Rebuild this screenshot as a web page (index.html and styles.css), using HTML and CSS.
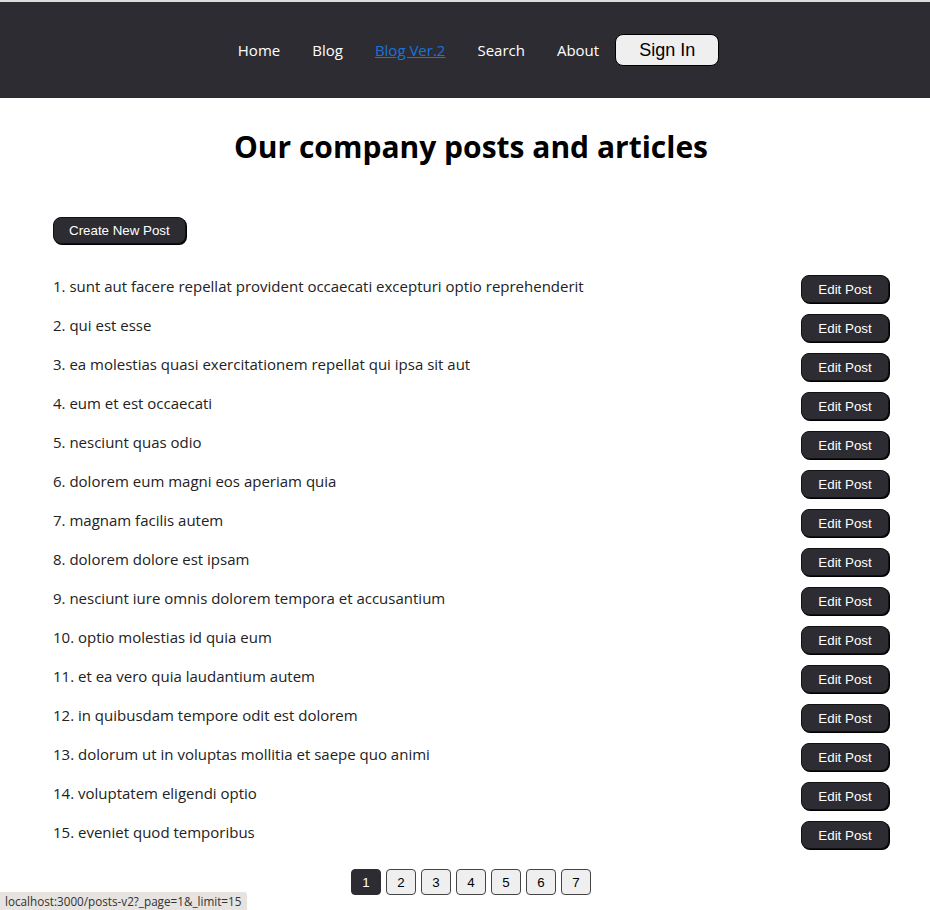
FILE: index.html
```html
<!DOCTYPE html>
<html lang="en">
<head>
<meta charset="utf-8">
<title>Posts</title>
<link rel="stylesheet" href="styles.css">
</head>
<body>
<header class="topbar">
  <nav class="nav">
    <a class="nav-link" href="#">Home</a>
    <a class="nav-link" href="#">Blog</a>
    <a class="nav-link active" href="#">Blog Ver.2</a>
    <a class="nav-link" href="#">Search</a>
    <a class="nav-link" href="#">About</a>
    <button class="signin">Sign In</button>
  </nav>
</header>
<main class="content">
  <h1 class="title">Our company posts and articles</h1>
  <div class="actions"><button class="btn-dark">Create New Post</button></div>
  <ul class="posts">
    <li class="post"><span class="post-title">1. sunt aut facere repellat provident occaecati excepturi optio reprehenderit</span><button class="btn-dark btn-edit">Edit Post</button></li>
    <li class="post"><span class="post-title">2. qui est esse</span><button class="btn-dark btn-edit">Edit Post</button></li>
    <li class="post"><span class="post-title">3. ea molestias quasi exercitationem repellat qui ipsa sit aut</span><button class="btn-dark btn-edit">Edit Post</button></li>
    <li class="post"><span class="post-title">4. eum et est occaecati</span><button class="btn-dark btn-edit">Edit Post</button></li>
    <li class="post"><span class="post-title">5. nesciunt quas odio</span><button class="btn-dark btn-edit">Edit Post</button></li>
    <li class="post"><span class="post-title">6. dolorem eum magni eos aperiam quia</span><button class="btn-dark btn-edit">Edit Post</button></li>
    <li class="post"><span class="post-title">7. magnam facilis autem</span><button class="btn-dark btn-edit">Edit Post</button></li>
    <li class="post"><span class="post-title">8. dolorem dolore est ipsam</span><button class="btn-dark btn-edit">Edit Post</button></li>
    <li class="post"><span class="post-title">9. nesciunt iure omnis dolorem tempora et accusantium</span><button class="btn-dark btn-edit">Edit Post</button></li>
    <li class="post"><span class="post-title">10. optio molestias id quia eum</span><button class="btn-dark btn-edit">Edit Post</button></li>
    <li class="post"><span class="post-title">11. et ea vero quia laudantium autem</span><button class="btn-dark btn-edit">Edit Post</button></li>
    <li class="post"><span class="post-title">12. in quibusdam tempore odit est dolorem</span><button class="btn-dark btn-edit">Edit Post</button></li>
    <li class="post"><span class="post-title">13. dolorum ut in voluptas mollitia et saepe quo animi</span><button class="btn-dark btn-edit">Edit Post</button></li>
    <li class="post"><span class="post-title">14. voluptatem eligendi optio</span><button class="btn-dark btn-edit">Edit Post</button></li>
    <li class="post"><span class="post-title">15. eveniet quod temporibus</span><button class="btn-dark btn-edit">Edit Post</button></li>
  </ul>
  <div class="pager">
    <button class="page current">1</button>
    <button class="page">2</button>
    <button class="page">3</button>
    <button class="page">4</button>
    <button class="page">5</button>
    <button class="page">6</button>
    <button class="page">7</button>
  </div>
</main>
<div class="status">localhost:3000/posts-v2?_page=1&amp;_limit=15</div>
</body>
</html>
```

FILE: styles.css
```css
html, body {
  margin: 0;
  padding: 0;
}
body {
  border-top: 2px solid #dcdcdc;
  background: #fff;
  font-family: "Open Sans", "Noto Sans", sans-serif;
  color: #222;
}
.topbar {
  background: #2d2c33;
  height: 96px;
  display: flex;
  align-items: center;
  justify-content: center;
}
.nav {
  display: flex;
  align-items: center;
  gap: 32px;
  margin-left: 27px;
}
.nav-link {
  color: #fff;
  text-decoration: none;
  font-size: 15px;
}
.nav-link.active {
  color: #1a73d6;
  text-decoration: underline;
}
.signin {
  margin-left: -16px;
  font-family: "Liberation Sans", Arial, sans-serif;
  font-size: 18px;
  color: #000;
  background: #efefef;
  border: 1px solid #000;
  border-radius: 8px;
  height: 32px;
  width: 104px;
  padding: 0;
}
.content {
  padding: 0 41px 0 53px;
}
.title {
  margin: 27px 0 0;
  text-align: center;
  font-size: 30px;
  line-height: 44px;
  font-weight: 700;
  color: #000;
}
.actions {
  margin-top: 48px;
}
.btn-dark {
  font-family: "Liberation Sans", Arial, sans-serif;
  font-size: 13.33px;
  color: #fff;
  background: #2d2c33;
  border: 1px solid #111;
  border-radius: 8px;
  box-shadow: 1px 1px 0 #000;
  height: 27px;
  padding: 0 15px;
}
.posts {
  list-style: none;
  margin: 31px 0 0;
  padding: 0;
  display: flex;
  flex-direction: column;
  gap: 11px;
}
.post {
  display: flex;
  justify-content: space-between;
  align-items: flex-start;
}
.post-title {
  font-size: 15px;
  line-height: 22px;
  color: #222;
}
.btn-edit {
  height: 28px;
  width: 88px;
  padding: 0;
}
.pager {
  display: flex;
  justify-content: center;
  gap: 5px;
  margin-top: 20px;
}
.page {
  width: 30px;
  height: 26px;
  padding: 0;
  font-family: "Liberation Sans", Arial, sans-serif;
  font-size: 13.33px;
  color: #000;
  background: #efefef;
  border: 1px solid #444;
  border-radius: 4px;
}
.page.current {
  background: #2d2c33;
  color: #fff;
  border-color: #2d2c33;
}
.status {
  position: fixed;
  left: 0;
  bottom: 0;
  background: #e6e3e0;
  color: #333;
  font-size: 11.7px;
  line-height: 18px;
  padding: 0 6px 0 5px;
  border-top-right-radius: 3px;
}
```
